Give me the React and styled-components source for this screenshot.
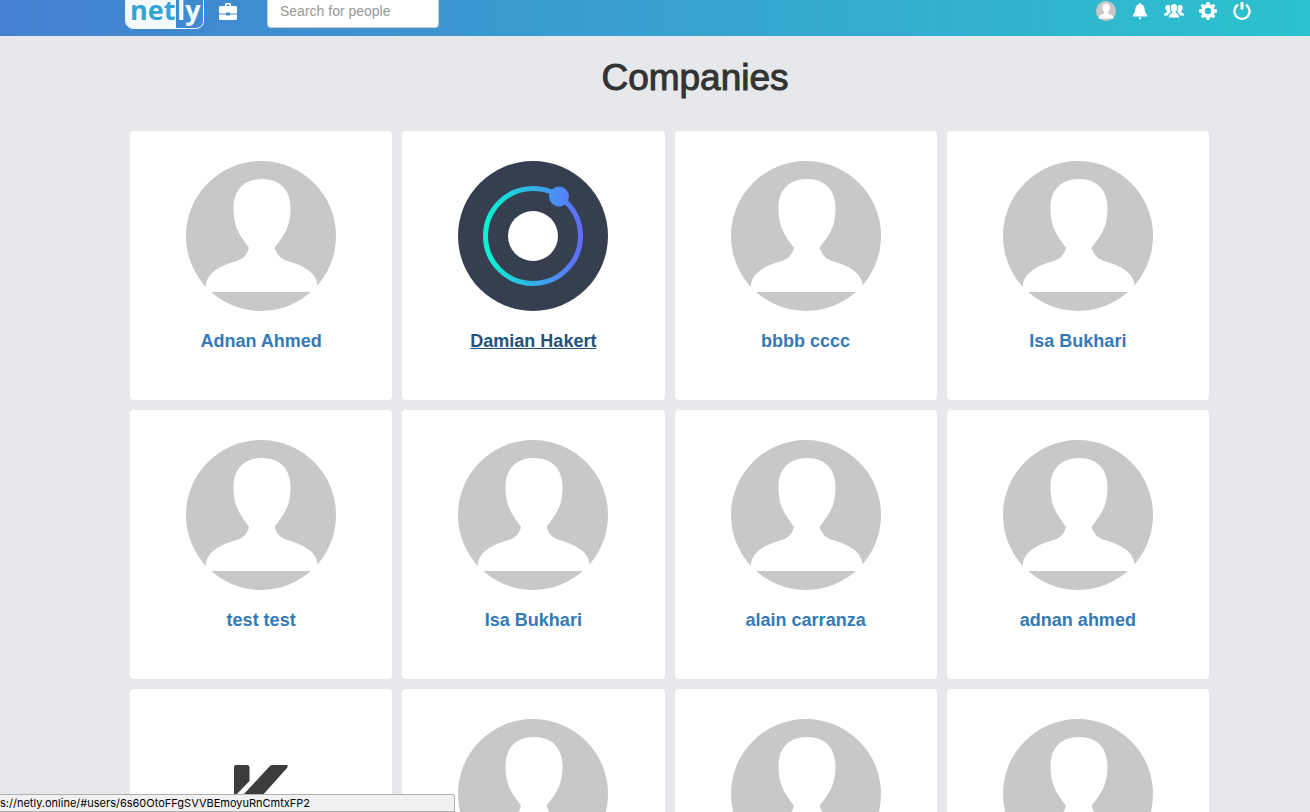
import React, { useState } from "react";
import styled, { createGlobalStyle } from "styled-components";

const GlobalStyle = createGlobalStyle`
  * {
    box-sizing: border-box;
  }

  body {
    margin: 0;
    background-color: #e7e8ec;
    color: #333;
    font-family: "Liberation Sans", Arial, sans-serif;
    font-size: 14px;
  }
`;

const Page = styled.div`
  height: 100vh;
  overflow: hidden;
`;

const Navbar = styled.nav`
  display: flex;
  align-items: center;
  height: 50px;
  margin-top: -14px;
  padding: 0 58px 0 125px;
  background: linear-gradient(to right, #4480d2, #2cc2ce);
`;

const Logo = styled.a`
  display: flex;
  width: 79px;
  height: 36px;
  border: 1px solid #f4fafa;
  border-radius: 8px;
  overflow: hidden;
  font-family: "Open Sans", sans-serif;
  font-size: 27px;
  font-weight: 700;
  line-height: 31px;
  text-decoration: none;
`;

const LogoNet = styled.span`
  flex: 1;
  padding-left: 4px;
  background-color: #f4fafa;
  color: #35a3d5;
`;

const LogoLy = styled.span`
  width: 27px;
  padding-left: 1px;
  color: #f4fafa;
`;

const NavLink = styled.a`
  display: flex;
  align-items: center;
  justify-content: center;
  width: 20px;
  height: 20px;
  color: #fff;
`;

const NavLeft = styled.div`
  display: flex;
  align-items: center;
  gap: 14px;
`;

const NavRight = styled.div`
  display: flex;
  align-items: center;
  gap: 14px;
  margin-left: auto;
`;

const SearchForm = styled.form`
  margin-left: 29px;
`;

const SearchInput = styled.input`
  display: block;
  width: 172px;
  height: 34px;
  padding: 6px 12px;
  border: 1px solid #ccc;
  border-radius: 4px;
  background-color: #fff;
  color: #555;
  font-family: inherit;
  font-size: 14px;

  &::placeholder {
    color: #999;
    opacity: 1;
  }
`;

const Title = styled.h1`
  margin: 22px 0 33px;
  padding: 0 50px 0 130px;
  font-size: 37px;
  font-weight: 400;
  line-height: 40px;
  text-align: center;
  -webkit-text-stroke: 1px currentColor;
`;

const Grid = styled.main`
  display: grid;
  grid-template-columns: repeat(4, 1fr);
  gap: 10px;
  padding: 0 101px 10px 130px;
`;

const Card = styled.article`
  display: flex;
  flex-direction: column;
  align-items: center;
  gap: 20px;
  padding: 30px 10px 49px;
  border-radius: 4px;
  background-color: #fff;
`;

const Name = styled.a`
  color: ${({ $hovered }) => ($hovered ? "#23527c" : "#337ab7")};
  font-size: 18px;
  font-weight: 700;
  line-height: 20px;
  text-decoration: ${({ $hovered }) => ($hovered ? "underline" : "none")};
`;

const StatusBar = styled.div`
  position: fixed;
  bottom: 0;
  left: 0;
  width: 455px;
  height: 18px;
  border: 1px solid #b0b0b0;
  border-left: none;
  border-radius: 0 3px 0 0;
  background-color: #f1f1f1;
  color: #000;
  font-family: Inter, sans-serif;
  font-size: 11px;
  line-height: 16px;
  white-space: nowrap;
`;

function PersonPicture({ size }) {
  return (
    <svg width={size} height={size} viewBox="0 0 150 150" aria-hidden="true">
      <circle cx="75" cy="75" r="75" fill="#c9c7c8" />
      <path
        fill="#fff"
        d="M76 18C57 18 47.500 30 47.500 47C47.500 68 55 75 63 87C61 93 59 97 51 100C35 104 20 112 20 125L16 131H135L131.500 125C131.500 112 117 104 101 100C93 97 91 93 88.500 87C97 75 104.500 68 104.500 47C104.500 30 95 18 76 18Z"
      />
    </svg>
  );
}

function OrbitPicture({ size }) {
  return (
    <svg width={size} height={size} viewBox="0 0 150 150" aria-hidden="true">
      <defs>
        <linearGradient
          id="orbit"
          gradientUnits="userSpaceOnUse"
          x1="25"
          y1="0"
          x2="125"
          y2="0"
        >
          <stop offset="0" stopColor="#06f7d0" />
          <stop offset="0.5" stopColor="#35b0e8" />
          <stop offset="0.75" stopColor="#4c8df6" />
          <stop offset="1" stopColor="#6369ff" />
        </linearGradient>
      </defs>
      <circle cx="75" cy="75" r="75" fill="#363f4f" />
      <circle
        cx="75"
        cy="75"
        r="47.5"
        fill="none"
        stroke="url(#orbit)"
        strokeWidth="5"
      />
      <circle cx="101" cy="35.5" r="10" fill="url(#orbit)" />
      <circle cx="75" cy="75" r="25" fill="#fff" />
    </svg>
  );
}

function LetterMarkPicture({ size }) {
  return (
    <svg width={size} height={size} viewBox="0 0 150 150" aria-hidden="true">
      <g fill="#3c3c3e">
        <path d="M50 46H61Q63.500 46 63.500 48.500V62L48 78V48Q48 46 50 46Z" />
        <path d="M86 46H100Q103 46 101 49L75 78L101 105H82L58 75L83 48Q84.500 46 86 46Z" />
      </g>
    </svg>
  );
}

const pictures = {
  person: PersonPicture,
  orbit: OrbitPicture,
  letter: LetterMarkPicture,
};

function BriefcaseIcon() {
  return (
    <svg width="18" height="17" viewBox="0 0 18 17" fill="currentColor">
      <path
        fillRule="evenodd"
        d="M6 3V1.500Q6 0 7.500 0H10.500Q12 0 12 1.500V3H16.500Q18 3 18 4.500V10.500H11V9.500H7V10.500H0V4.500Q0 3 1.500 3ZM7.500 3H10.500V1.500H7.500Z"
      />
      <path d="M0 11.500H7V12.500H11V11.500H18V15.500Q18 17 16.500 17H1.500Q0 17 0 15.500Z" />
    </svg>
  );
}

function BellIcon() {
  return (
    <svg width="14" height="17" viewBox="0 0 14 17" fill="currentColor">
      <path d="M7 0C7.800 0 8.300 .6 8.300 1.300C10.500 2 11.500 3.700 11.700 6.500C11.900 9 12.500 10.500 14 11.500V13.500H0V11.500C1.500 10.500 2.100 9 2.300 6.500C2.500 3.700 3.500 2 5.700 1.300C5.700 .6 6.200 0 7 0Z" />
      <path d="M5.500 14.500H8.500Q8 16.500 7 16.500T5.500 14.500Z" />
    </svg>
  );
}

function GroupIcon() {
  return (
    <svg width="20" height="14" viewBox="0 0 20 14" fill="currentColor">
      <path d="M10 0C12.300 0 13.300 1.500 13.300 3.700C13.300 5.700 12.500 6.700 11.700 7.700V9C14 9.800 15 10.500 15.200 13.500H4.800C5 10.500 6 9.800 8.300 9V7.700C7.500 6.700 6.700 5.700 6.700 3.700C6.700 1.500 7.700 0 10 0Z" />
      <path d="M4 1C5 1 5.500 1.300 6 1.900C5.500 4.500 5.900 6.200 6.900 7.800V8.200C5.200 8.900 4.400 9.700 4.100 11.500H0C0 9.700 .8 9 2.800 8.300V7C2 6.200 1.300 5.200 1.300 3.800C1.300 2 2.300 1 4 1Z" />
      <path d="M16 1C15 1 14.500 1.300 14 1.900C14.500 4.500 14.100 6.200 13.100 7.800V8.200C14.800 8.900 15.600 9.700 15.900 11.500H20C20 9.700 19.200 9 17.200 8.300V7C18 6.200 18.700 5.200 18.700 3.800C18.700 2 17.700 1 16 1Z" />
    </svg>
  );
}

function GearIcon() {
  return (
    <svg width="18" height="18" viewBox="0 0 18 18" fill="none">
      <circle cx="9" cy="9" r="5" stroke="currentColor" strokeWidth="3.500" />
      {[0, 45, 90, 135, 180, 225, 270, 315].map((angle) => (
        <path
          key={angle}
          fill="currentColor"
          d="M7 3L7.500 .1H10.500L11 3Z"
          transform={`rotate(${angle} 9 9)`}
        />
      ))}
    </svg>
  );
}

function PowerIcon() {
  return (
    <svg
      width="18"
      height="18"
      viewBox="0 0 18 18"
      fill="none"
      stroke="currentColor"
    >
      <path d="M5 2.800A7.600 7.600 0 1 0 13 2.800" strokeWidth="2.300" />
      <path d="M9 0V7.500" strokeWidth="3" />
    </svg>
  );
}

const companies = [
  { name: "Adnan Ahmed", picture: "person" },
  { name: "Damian Hakert", picture: "orbit", hovered: true },
  { name: "bbbb cccc", picture: "person" },
  { name: "Isa Bukhari", picture: "person" },
  { name: "test test", picture: "person" },
  { name: "Isa Bukhari", picture: "person" },
  { name: "alain carranza", picture: "person" },
  { name: "adnan ahmed", picture: "person" },
  { name: "", picture: "letter" },
  { name: "", picture: "person" },
  { name: "", picture: "person" },
  { name: "", picture: "person" },
];

function CompanyCard({ name, picture, hovered }) {
  const Picture = pictures[picture];

  return (
    <Card>
      <Picture size={150} />
      {name && (
        <Name href="#users" $hovered={hovered}>
          {name}
        </Name>
      )}
    </Card>
  );
}

function App() {
  const [query, setQuery] = useState("");

  return (
    <Page>
      <GlobalStyle />
      <Navbar>
        <NavLeft>
          <Logo href="#home">
            <LogoNet>net</LogoNet>
            <LogoLy>ly</LogoLy>
          </Logo>
          <NavLink href="#companies" aria-label="Companies">
            <BriefcaseIcon />
          </NavLink>
        </NavLeft>
        <SearchForm onSubmit={(event) => event.preventDefault()}>
          <SearchInput
            type="text"
            aria-label="Search for people"
            placeholder="Search for people"
            value={query}
            onChange={(event) => setQuery(event.target.value)}
          />
        </SearchForm>
        <NavRight>
          <NavLink href="#profile" aria-label="Profile">
            <PersonPicture size={20} />
          </NavLink>
          <NavLink href="#notifications" aria-label="Notifications">
            <BellIcon />
          </NavLink>
          <NavLink href="#people" aria-label="People">
            <GroupIcon />
          </NavLink>
          <NavLink href="#settings" aria-label="Settings">
            <GearIcon />
          </NavLink>
          <NavLink href="#logout" aria-label="Log out">
            <PowerIcon />
          </NavLink>
        </NavRight>
      </Navbar>
      <Title>Companies</Title>
      <Grid>
        {companies.map((company, index) => (
          <CompanyCard key={index} {...company} />
        ))}
      </Grid>
      <StatusBar>s://netly.online/#users/6s60OtoFFgSVVBEmoyuRnCmtxFP2</StatusBar>
    </Page>
  );
}

export default App;
